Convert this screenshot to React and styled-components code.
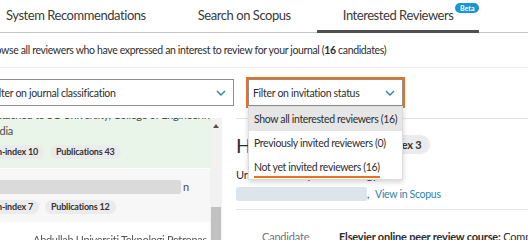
import React from 'react'
import styled, { createGlobalStyle, css } from 'styled-components'

const GlobalStyle = createGlobalStyle`
  html, body { margin: 0; padding: 0; background: #fff; }
  body {
    font-family: Lato, "Open Sans", sans-serif;
    color: #2e2e2e;
    width: 528px;
    height: 240px;
    overflow: hidden;
  }
  * { box-sizing: border-box; }
`

const Page = styled.div`
  width: 528px;
  height: 240px;
  overflow: hidden;
  position: relative;
`

const TabBar = styled.nav`
  display: flex;
  height: 33px;
  margin-left: -20px;
  border-bottom: 1px solid #c4c4c4;
`

const Tab = styled.div`
  position: relative;
  display: flex;
  align-items: center;
  padding: 0 26px 2px;
  font-size: 13px;
  letter-spacing: -0.45px;
  color: #3a3a3a;
  white-space: nowrap;
  ${p => p.$active && css`
    &::after {
      content: '';
      position: absolute;
      left: 0;
      right: 0;
      bottom: -1px;
      height: 3px;
      background: #505050;
    }
  `}
`

const Badge = styled.span`
  position: absolute;
  top: 3px;
  right: 0;
  background: #1a96d4;
  color: #fff;
  font-size: 7px;
  font-weight: 700;
  letter-spacing: 0;
  line-height: 10px;
  padding: 0 5px;
  border-radius: 6px;
`

const Main = styled.div`
  margin-left: -14px;
  width: calc(100% + 14px);
`

const Intro = styled.p`
  margin: 0;
  padding: 8px 0 8px;
  font-size: 10.5px;
  letter-spacing: -0.35px;
  line-height: 18px;
  white-space: nowrap;
  border-bottom: 1px solid #ececec;
  b { font-weight: 700; }
`

const Filters = styled.div`
  display: flex;
  gap: 14px;
  padding: 11px 0 12px;
`

const SelectWrap = styled.div`
  position: relative;
`

const Select = styled.div`
  width: ${p => p.$width}px;
  height: 27px;
  display: flex;
  align-items: center;
  justify-content: space-between;
  padding: 0 7px 0 ${p => p.$indent || 4}px;
  border: 1px solid #8e8e8e;
  font-size: 10.5px;
  letter-spacing: -0.3px;
  color: #2e2e2e;
  background: #fff;
  white-space: nowrap;
  ${p => p.$focused && css`
    outline: 2px solid #e9711c;
  `}
`

const Menu = styled.ul`
  position: absolute;
  top: 100%;
  left: 0;
  width: 100%;
  margin: 0;
  padding: 0;
  list-style: none;
  background: #fff;
  border: 1px solid #dcdcdc;
  box-shadow: 0 2px 5px rgba(0, 0, 0, 0.18);
  z-index: 5;
`

const MenuItem = styled.li`
  height: 24px;
  line-height: 24px;
  padding: 0 5px;
  font-size: 10.5px;
  letter-spacing: -0.35px;
  white-space: nowrap;
  background: ${p => (p.$active ? '#e6e6e6' : '#fff')};
`

const Underlined = styled.span`
  display: inline-block;
  line-height: 15px;
  padding-bottom: 1px;
  border-bottom: 2px solid #e9711c;
`

const Content = styled.div`
  display: flex;
  height: 122px;
  overflow: hidden;
`

const ListPanel = styled.div`
  width: 224px;
  flex: none;
  overflow: hidden;
`

const List = styled.div`
  margin-top: -37px;
`

const Card = styled.div`
  padding: ${p => p.$pad || '8px 5px 9px'};
  margin-bottom: 1px;
  background: ${p => p.$tone || '#fff'};
  font-size: 11px;
  letter-spacing: -0.3px;
  line-height: 16px;
  color: #4a4a4a;
`

const Name = styled.div`
  font-weight: 700;
  font-size: 13px;
  line-height: 18px;
  color: #2e2e2e;
  white-space: nowrap;
`

const Line = styled.div`
  white-space: nowrap;
`

const Chips = styled.div`
  display: flex;
  gap: 6px;
  margin-top: 6px;
`

const Chip = styled.span`
  display: inline-flex;
  align-items: center;
  height: ${p => (p.$large ? 19 : 14)}px;
  padding: 0 ${p => (p.$large ? 8 : 6)}px;
  border-radius: 10px;
  background: #ebebeb;
  font-size: ${p => (p.$large ? 11 : 9)}px;
  letter-spacing: -0.2px;
  font-weight: 700;
  color: #333;
  white-space: nowrap;
`

const RedactRow = styled.div`
  display: flex;
  align-items: center;
  gap: 2px;
  height: 14px;
  margin-left: -4px;
  white-space: nowrap;
`

const Redact = styled.span`
  display: inline-block;
  width: ${p => p.$width}px;
  height: 14px;
  border-radius: 2px;
  background: ${p => p.$tone || '#dadada'};
`

const Faded = styled.div`
  padding-left: 42px;
  white-space: nowrap;
  color: #555;
  filter: blur(0.6px);
`

const Scrollbar = styled.div`
  width: 12px;
  flex: none;
  background: #f1f1f1;
  display: flex;
  flex-direction: column;
  align-items: center;
`

const Arrow = styled.div`
  margin-top: 6px;
  width: 0;
  height: 0;
  border-left: 3.5px solid transparent;
  border-right: 3.5px solid transparent;
  border-bottom: 4px solid #505050;
`

const Thumb = styled.div`
  width: 10px;
  height: 40px;
  margin-top: 79px;
  background: #c1c1c1;
`

const Detail = styled.section`
  flex: 1;
  margin-left: 14px;
  border-top: 1px solid #e3e3e3;
  white-space: nowrap;
`

const Header = styled.div`
  display: flex;
  align-items: center;
  gap: 12px;
  padding-top: 9px;
  height: 33px;
  box-sizing: content-box;
`

const Heading = styled.h2`
  margin: 0;
  font-size: 20px;
  line-height: 24px;
  font-weight: 400;
  color: #2e2e2e;
`

const Affil = styled.div`
  margin-top: 6px;
  font-size: 11px;
  letter-spacing: -0.3px;
  line-height: 16px;
`

const ScopusRow = styled.div`
  display: flex;
  align-items: center;
  height: 16px;
  margin-top: 3px;
  padding-bottom: 7px;
  box-sizing: content-box;
  border-bottom: 1px solid #e6e6e6;
  font-size: 10.5px;
  letter-spacing: -0.3px;
`

const Link = styled.a`
  margin-left: 6px;
  color: #2e7fb0;
  text-decoration: none;
`

const InfoRow = styled.div`
  display: flex;
  padding: 19px 0 0 26px;
  font-size: 11px;
  letter-spacing: -0.2px;
  line-height: 15px;
`

const Label = styled.div`
  width: 77px;
  flex: none;
  white-space: normal;
  color: #737373;
`

const Value = styled.div`
  b { font-weight: 700; }
`

function Chevron() {
  return (
    <svg width="10" height="6" viewBox="0 0 10 6">
      <polyline points="1,1 5,5 9,1" fill="none" stroke="#2b83b5" strokeWidth="1.4" />
    </svg>
  )
}

export default function App() {
  return (
    <Page>
      <GlobalStyle />
      <TabBar>
        <Tab>System Recommendations</Tab>
        <Tab>Search on Scopus</Tab>
        <Tab $active>
          Interested Reviewers
          <Badge>Beta</Badge>
        </Tab>
      </TabBar>
      <Main>
        <Intro>
          Browse all reviewers who have expressed an interest to review for your journal (<b>16</b> candidates)
        </Intro>
        <Filters>
          <Select $width={248} $indent={4}>
            Filter on journal classification
            <Chevron />
          </Select>
          <SelectWrap>
            <Select $width={155} $focused>
              Filter on invitation status
              <Chevron />
            </Select>
            <Menu>
              <MenuItem $active>Show all interested reviewers (16)</MenuItem>
              <MenuItem>Previously invited reviewers (0)</MenuItem>
              <MenuItem>
                <Underlined>Not yet invited reviewers (16)</Underlined>
              </MenuItem>
            </Menu>
          </SelectWrap>
        </Filters>
        <Content>
          <ListPanel>
            <List>
              <Card $tone="#e9f5e8">
                <Name>Rajesh Kumar</Name>
                <Line>Attached to SG University, College of Engineering,</Line>
                <Line>India</Line>
                <Chips>
                  <Chip>h-index 10</Chip>
                  <Chip>Publications 43</Chip>
                </Chips>
              </Card>
              <Card $tone="#f7f7f7" $pad="11px 5px 8px">
                <RedactRow>
                  <Redact $width={194} />n
                </RedactRow>
                <Chips>
                  <Chip>h-index 7</Chip>
                  <Chip>Publications 12</Chip>
                </Chips>
              </Card>
              <Card $pad="9px 5px 8px">
                <Faded>Abdullah Universiti Teknologi Petronas</Faded>
              </Card>
            </List>
          </ListPanel>
          <Scrollbar>
            <Arrow />
            <Thumb />
          </Scrollbar>
          <Detail>
            <Header>
              <Heading>Hasan Al-Aziz</Heading>
              <Chip $large>h-index 3</Chip>
            </Header>
            <Affil>Urmia University of Technology</Affil>
            <ScopusRow>
              <Redact $width={131} $tone="#dde5ec" />,
              <Link href="#">View in Scopus</Link>
            </ScopusRow>
            <InfoRow>
              <Label>Candidate Information</Label>
              <Value>
                <b>Elsevier online peer review course:</b> Completed
              </Value>
            </InfoRow>
          </Detail>
        </Content>
      </Main>
    </Page>
  )
}
